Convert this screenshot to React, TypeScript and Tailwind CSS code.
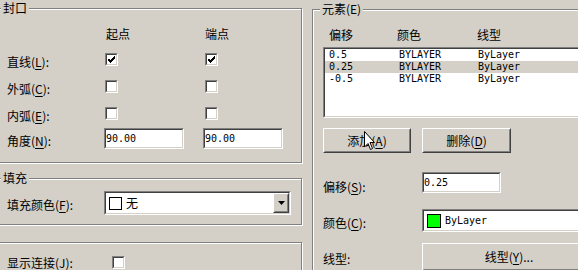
import React from "react";

const mono = "font-['DejaVu_Sans_Mono',monospace] text-[10px]";

function U({ c }: { c: string }) {
  return <span className="underline underline-offset-[2px]">{c}</span>;
}

function Label({ t, k, colon = true }: { t: string; k?: string; colon?: boolean }) {
  return (
    <span className="whitespace-nowrap text-[12px] leading-[14px]">
      {t}
      {k ? (
        <>
          (<U c={k} />)
        </>
      ) : null}
      {colon ? ":" : ""}
    </span>
  );
}

function Sunken({
  className = "",
  innerClassName = "",
  children,
}: {
  className?: string;
  innerClassName?: string;
  children?: React.ReactNode;
}) {
  return (
    <div className={`border border-t-[#808080] border-l-[#808080] border-b-white border-r-white ${className}`}>
      <div
        className={`h-full w-full border border-t-[#404040] border-l-[#404040] border-b-[#d4d0c8] border-r-[#d4d0c8] bg-white ${innerClassName}`}
      >
        {children}
      </div>
    </div>
  );
}

function Raised({ className = "", children }: { className?: string; children?: React.ReactNode }) {
  return (
    <div className={`border border-t-white border-l-white border-b-[#404040] border-r-[#404040] ${className}`}>
      <div className="flex h-full w-full items-center justify-center border border-t-[#d4d0c8] border-l-[#d4d0c8] border-b-[#808080] border-r-[#808080] bg-[#d4d0c8]">
        {children}
      </div>
    </div>
  );
}

function Check({ checked = false }: { checked?: boolean }) {
  return (
    <Sunken className="h-[13px] w-[13px] shrink-0" innerClassName="relative">
      {checked ? (
        <svg width="9" height="9" viewBox="0 0 9 9" className="absolute left-0 top-0">
          <path d="M1 3h1v3h1v1h1V6h1V5h1V4h1V3h1V1H7v1H6v1H5v1H4v1H3V4H2V3H1z" fill="#000" />
          <path d="M1 3v3h1v1h1v1h1V7h1V6h1V5h1V4h1V2h-1v1H6v1H5v1H4v1H3V5H2V4H1z" fill="#000" />
        </svg>
      ) : null}
    </Sunken>
  );
}

function Group({
  title,
  className = "",
  titleLeft = "left-[6px]",
  children,
}: {
  title?: React.ReactNode;
  className?: string;
  titleLeft?: string;
  children?: React.ReactNode;
}) {
  return (
    <div className={`relative shrink-0 border border-[#808080] shadow-[inset_1px_1px_0_#fff,1px_1px_0_#fff] ${className}`}>
      {title ? (
        <span
          className={`absolute top-[-9px] ${titleLeft} bg-[#d4d0c8] px-[2px] text-[12px] leading-[16px] whitespace-nowrap`}
        >
          {title}
        </span>
      ) : null}
      {children}
    </div>
  );
}

function DownTriangle() {
  return (
    <svg width="7" height="4" viewBox="0 0 7 4">
      <path d="M0 0h7L3.5 4z" fill="#000" />
    </svg>
  );
}

function Cursor() {
  return (
    <svg
      width="12"
      height="20"
      viewBox="0 0 12 20"
      className="absolute left-[364px] top-[131px]"
    >
      <path
        d="M0.5 0.5 L0.5 16 L4 12.5 L6.5 18.5 L8.5 17.5 L6 11.5 L10.5 11.5 Z"
        fill="#fff"
        stroke="#000"
        strokeWidth="1"
        strokeLinejoin="miter"
      />
    </svg>
  );
}

export default function App() {
  const rows = [
    { t: "直线", k: "L", a: true, b: true },
    { t: "外弧", k: "C", a: false, b: false },
    { t: "内弧", k: "E", a: false, b: false },
  ];
  const items = [
    { o: "0.5", c: "BYLAYER", l: "ByLayer", sel: false },
    { o: "0.25", c: "BYLAYER", l: "ByLayer", sel: true },
    { o: "-0.5", c: "BYLAYER", l: "ByLayer", sel: false },
  ];
  return (
    <div className="relative flex h-[270px] w-[578px] overflow-hidden bg-[#d4d0c8] font-['Noto_Sans_CJK_SC',sans-serif] text-black">
      {/* Left column */}
      <div className="ml-[-6px] flex w-[308px] shrink-0 flex-col">
        <Group title="封口" className="mt-[8px] h-[155px]">
          <div className="pl-[12px] pt-[18px]">
            <div className="flex h-[14px] items-center text-[12px] leading-[14px]">
              <div className="w-[97px]" />
              <div className="w-[99px] pl-[2px]">起点</div>
              <div className="pl-[2px]">端点</div>
            </div>
            <div className="mt-[5px]">
              {rows.map((r) => (
                <div key={r.t} className="flex h-[27px] items-center">
                  <div className="w-[97px]">
                    <Label t={r.t} k={r.k} />
                  </div>
                  <div className="w-[99px] pl-[1px]">
                    <Check checked={r.a} />
                  </div>
                  <div className="pl-[2px]">
                    <Check checked={r.b} />
                  </div>
                </div>
              ))}
            </div>
            <div className="mt-[1px] flex h-[21px] items-center">
              <div className="w-[97px]">
                <Label t="角度" k="N" />
              </div>
              <div className="w-[99px]">
                <Sunken className="h-[21px] w-[80px]" innerClassName="flex items-center">
                  <span className={`${mono} leading-[12px]`}>90.00</span>
                </Sunken>
              </div>
              <div>
                <Sunken className="h-[21px] w-[80px]" innerClassName="flex items-center">
                  <span className={`${mono} leading-[12px]`}>90.00</span>
                </Sunken>
              </div>
            </div>
          </div>
        </Group>

        <Group title="填充" className="mt-[15px] h-[47px]">
          <div className="pl-[12px] pt-[12px]">
            <div className="flex h-[24px] items-center">
              <div className="w-[97px]">
                <Label t="填充颜色" k="F" />
              </div>
              <Sunken className="h-[24px] w-[187px]" innerClassName="flex items-center">
                <div className="ml-[3px] h-[13px] w-[13px] border border-black bg-white" />
                <span className="ml-[4px] flex-1 text-[12px] leading-[14px]">无</span>
                <Raised className="h-[20px] w-[16px]">
                  <DownTriangle />
                </Raised>
              </Sunken>
            </div>
          </div>
        </Group>

        <Group className="mt-[17px] h-[40px]">
          <div className="pl-[12px] pt-[12px]">
            <div className="flex h-[13px] items-center">
              <div className="w-[105px] mt-[-1px]">
                <Label t="显示连接" k="J" />
              </div>
              <div className="mt-[2px]">
                <Check />
              </div>
            </div>
          </div>
        </Group>
      </div>

      {/* Right column */}
      <div className="ml-[10px] mt-[9px] w-[320px] shrink-0">
        <Group title="元素(E)" titleLeft="left-[7px]" className="h-[300px]">
          <div className="pl-[10px] pt-[18px]">
            <div className="flex h-[14px] items-center pl-[6px] text-[12px] leading-[14px]">
              <div className="w-[68px]">偏移</div>
              <div className="w-[80px]">颜色</div>
              <div>线型</div>
            </div>
            <Sunken className="mt-[5px] h-[71px] w-[300px]">
              {items.map((it) => (
                <div
                  key={it.o}
                  className={`flex h-[12px] items-center pl-[4px] ${mono} leading-[12px] ${it.sel ? "bg-[#d4d0c8]" : ""}`}
                >
                  <div className="w-[70px]">{it.o}</div>
                  <div className="w-[79px]">{it.c}</div>
                  <div>{it.l}</div>
                </div>
              ))}
            </Sunken>
            <div className="mt-[10px] flex gap-[11px]">
              <Raised className="h-[25px] w-[88px]">
                <Label t="添加" k="A" colon={false} />
              </Raised>
              <Raised className="h-[25px] w-[89px]">
                <Label t="删除" k="D" colon={false} />
              </Raised>
            </div>
            <div className="mt-[19px] flex h-[21px] items-center">
              <div className="w-[99px] pt-[4px]">
                <Label t="偏移" k="S" />
              </div>
              <Sunken className="h-[21px] w-[79px]" innerClassName="flex items-center">
                <span className={`${mono} leading-[12px]`}>0.25</span>
              </Sunken>
            </div>
            <div className="mt-[16px] flex h-[23px] items-center">
              <div className="w-[99px]">
                <Label t="颜色" k="C" />
              </div>
              <Sunken className="h-[23px] w-[200px]" innerClassName="flex items-center">
                <div className="ml-[3px] h-[14px] w-[14px] border border-black bg-[#00ff00]" />
                <span className={`ml-[4px] ${mono} leading-[12px]`}>ByLayer</span>
              </Sunken>
            </div>
            <div className="mt-[11px] flex h-[28px] items-center">
              <div className="w-[99px]">
                <Label t="线型" />
              </div>
              <Raised className="h-[28px] w-[174px]">
                <span className="whitespace-nowrap text-[12px] leading-[14px]">
                  线型(<U c="Y" />)...
                </span>
              </Raised>
            </div>
          </div>
        </Group>
      </div>

      <Cursor />
    </div>
  );
}
